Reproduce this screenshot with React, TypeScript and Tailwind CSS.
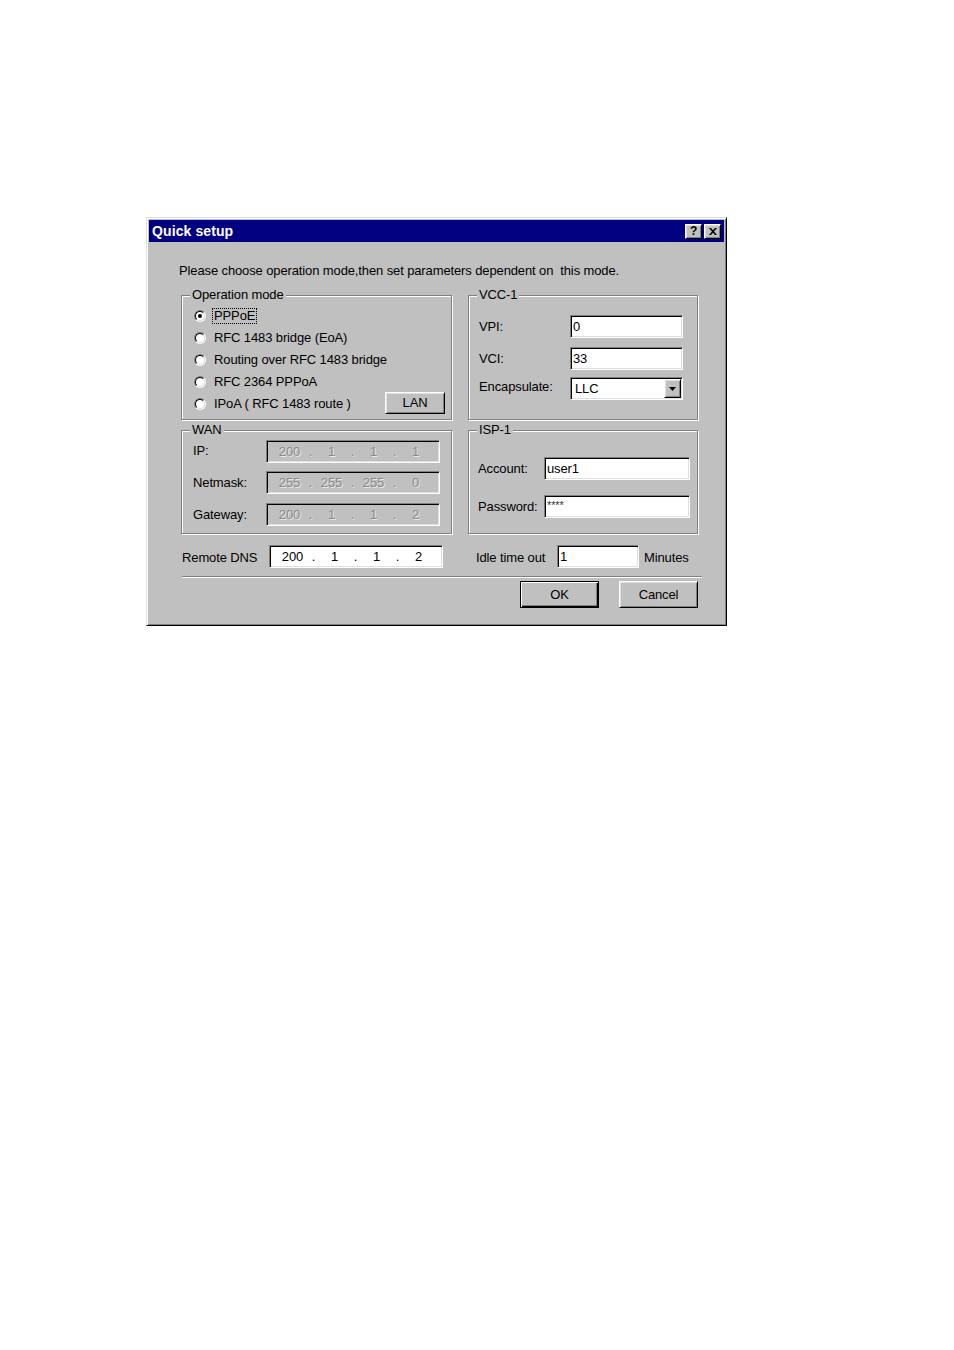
import React from "react";

const raised =
  "border border-t-white border-l-white border-r-black border-b-black shadow-[inset_1px_1px_0_#dfdfdf,inset_-1px_-1px_0_#808080]";
const sunken =
  "border border-t-[#808080] border-l-[#808080] border-r-white border-b-white shadow-[inset_1px_1px_0_#000,inset_-1px_-1px_0_#dfdfdf]";
const group = "relative border border-[#808080] shadow-[inset_1px_1px_0_#fff,1px_1px_0_#fff]";

function GroupLabel({ children }: { children: React.ReactNode }) {
  return (
    <span className="absolute left-[8px] -top-[9px] bg-[#c0c0c0] px-[2px] leading-[16px] whitespace-nowrap">
      {children}
    </span>
  );
}

function Radio({ checked }: { checked?: boolean }) {
  return (
    <span className="w-[12px] h-[12px] shrink-0 rounded-full border border-t-[#808080] border-l-[#808080] border-r-white border-b-white flex items-center justify-center">
      <span className="w-[10px] h-[10px] rounded-full border border-t-black border-l-black border-r-[#dfdfdf] border-b-[#dfdfdf] bg-white flex items-center justify-center">
        {checked && <span className="w-[4px] h-[4px] rounded-full bg-black" />}
      </span>
    </span>
  );
}

function Field({
  className,
  disabled,
  children,
}: {
  className: string;
  disabled?: boolean;
  children?: React.ReactNode;
}) {
  return (
    <div
      className={`${sunken} ${className} h-[23px] shrink-0 flex items-center ${
        disabled ? "bg-[#c0c0c0]" : "bg-white"
      }`}
    >
      {children}
    </div>
  );
}

function Ip({ parts, disabled }: { parts: string[]; disabled?: boolean }) {
  return (
    <div
      className={`flex pl-[4px] ${
        disabled ? "text-[#8a8a8a] [text-shadow:1px_1px_0_#e8e8e8]" : "text-black"
      }`}
    >
      {parts.map((p, i) => (
        <React.Fragment key={i}>
          {i > 0 && <span className="w-[5px] text-center">.</span>}
          <span className="w-[37px] text-center">{p}</span>
        </React.Fragment>
      ))}
    </div>
  );
}

function CloseGlyph() {
  return (
    <svg width="8" height="7" viewBox="0 0 8 7">
      <path d="M0 0h2l2 2.3L6 0h2L5 3.5 8 7H6L4 4.7 2 7H0l3-3.5z" fill="#000" />
    </svg>
  );
}

export default function App() {
  const radios = [
    "PPPoE",
    "RFC 1483 bridge (EoA)",
    "Routing over RFC 1483 bridge",
    "RFC 2364 PPPoA",
    "IPoA ( RFC 1483 route )",
  ];
  return (
    <div className="min-h-[1350px] w-full bg-white pt-[217px] pl-[146px] font-['Liberation_Sans',Arial,sans-serif] text-[13px] leading-[16px] tracking-[-0.12px] text-black">
      <div className="w-[581px] h-[409px] bg-[#c0c0c0] border border-t-[#dfdfdf] border-l-[#dfdfdf] border-r-black border-b-black shadow-[inset_1px_1px_0_#fff,inset_-1px_-1px_0_#808080] p-[2px] flex flex-col">
        {/* Title bar */}
        <div className="h-[22px] shrink-0 bg-[#000080] flex items-center pl-[3px] pr-[3px]">
          <span className="text-white font-bold text-[14px] leading-[16px] tracking-[0.1px]">Quick setup</span>
          <div className="ml-auto flex gap-[2px]">
            <span className={`${raised} w-[17px] h-[15px] bg-[#c0c0c0] flex items-center justify-center text-[12px] leading-[12px] font-bold`}>
              ?
            </span>
            <span className={`${raised} w-[17px] h-[15px] bg-[#c0c0c0] flex items-center justify-center`}>
              <CloseGlyph />
            </span>
          </div>
        </div>

        {/* Body */}
        <div className="flex flex-col flex-1">
          <p className="mt-[21px] pl-[30px] whitespace-pre">
            Please choose operation mode,then set parameters dependent on  this mode.
          </p>

          <div className="mt-[16px] ml-[32px] grid grid-cols-[271px_230px] gap-x-[16px]">
            {/* Operation mode */}
            <div className={`${group} h-[125px]`}>
              <GroupLabel>Operation mode</GroupLabel>
              <div className="pt-[9px] flex flex-col">
                {radios.map((r, i) => (
                  <div key={r} className="h-[22px] flex items-center pl-[12px] gap-[8px]">
                    <Radio checked={i === 0} />
                    {i === 0 ? (
                      <span className="outline-1 outline-dotted outline-black px-[1px] -ml-[1px] leading-[14px]">
                        {r}
                      </span>
                    ) : (
                      <span className="whitespace-pre">{r}</span>
                    )}
                    {i === 4 && (
                      <button className={`${raised} ml-auto mr-[6px] -mt-[2px] w-[60px] h-[22px] bg-[#c0c0c0] text-[13px] leading-[16px]`}>
                        LAN
                      </button>
                    )}
                  </div>
                ))}
              </div>
            </div>

            {/* VCC-1 */}
            <div className={`${group} h-[125px]`}>
              <GroupLabel>VCC-1</GroupLabel>
              <div className="pt-[19px] flex flex-col">
                <div className="flex items-center h-[23px]">
                  <span className="w-[101px] pl-[10px]">VPI:</span>
                  <Field className="w-[113px]">
                    <span className="pl-[2px]">0</span>
                  </Field>
                </div>
                <div className="mt-[9px] flex items-center h-[23px]">
                  <span className="w-[101px] pl-[10px]">VCI:</span>
                  <Field className="w-[113px]">
                    <span className="pl-[2px]">33</span>
                  </Field>
                </div>
                <div className="mt-[7px] flex items-center h-[23px]">
                  <span className="w-[101px] pl-[10px] -mt-[4px]">Encapsulate:</span>
                  <div className={`${sunken} w-[113px] h-[23px] bg-white flex items-center p-[1px]`}>
                    <span className="pl-[3px] flex-1">LLC</span>
                    <span className={`${raised} w-[17px] h-[19px] bg-[#c0c0c0] flex items-center justify-center`}>
                      <svg width="7" height="4" viewBox="0 0 7 4">
                        <path d="M0 0h7L3.5 4z" fill="#000" />
                      </svg>
                    </span>
                  </div>
                </div>
              </div>
            </div>
          </div>

          <div className="mt-[10px] ml-[32px] grid grid-cols-[271px_230px] gap-x-[16px]">
            {/* WAN */}
            <div className={`${group} h-[104px]`}>
              <GroupLabel>WAN</GroupLabel>
              <div className="pt-[9px] flex flex-col">
                <div className="flex items-center h-[23px]">
                  <span className="w-[84px] pl-[11px] -mt-[2px]">IP:</span>
                  <Field className="w-[174px]" disabled>
                    <Ip parts={["200", "1", "1", "1"]} disabled />
                  </Field>
                </div>
                <div className="mt-[8px] flex items-center h-[23px]">
                  <span className="w-[84px] pl-[11px]">Netmask:</span>
                  <Field className="w-[174px]" disabled>
                    <Ip parts={["255", "255", "255", "0"]} disabled />
                  </Field>
                </div>
                <div className="mt-[9px] flex items-center h-[23px]">
                  <span className="w-[84px] pl-[11px] mt-[1px]">Gateway:</span>
                  <Field className="w-[174px]" disabled>
                    <Ip parts={["200", "1", "1", "2"]} disabled />
                  </Field>
                </div>
              </div>
            </div>

            {/* ISP-1 */}
            <div className={`${group} h-[104px]`}>
              <GroupLabel>ISP-1</GroupLabel>
              <div className="pt-[26px] flex flex-col">
                <div className="flex items-center h-[23px]">
                  <span className="w-[75px] pl-[9px]">Account:</span>
                  <Field className="w-[146px]">
                    <span className="pl-[2px]">user1</span>
                  </Field>
                </div>
                <div className="mt-[15px] flex items-center h-[23px]">
                  <span className="w-[75px] pl-[9px]">Password:</span>
                  <Field className="w-[146px]">
                    <span className="pl-[2px] text-[11px] text-[#333] -mt-[4px]">****</span>
                  </Field>
                </div>
              </div>
            </div>
          </div>

          {/* Remote DNS / idle */}
          <div className="mt-[11px] ml-[33px] flex items-center h-[23px]">
            <span className="w-[87px] shrink-0 mt-[2px]">Remote DNS</span>
            <Field className="w-[174px]">
              <Ip parts={["200", "1", "1", "2"]} />
            </Field>
            <span className="ml-[33px] w-[81px] shrink-0 mt-[2px]">Idle time out</span>
            <Field className="w-[82px]">
              <span className="pl-[2px]">1</span>
            </Field>
            <span className="ml-[5px] mt-[2px]">Minutes</span>
          </div>

          <div className="mt-[8px] ml-[33px] w-[520px] h-[2px] border-t border-t-[#808080] border-b border-b-white" />

          <div className="mt-[3px] flex justify-end pr-[26px] gap-[20px]">
            <button className="w-[79px] h-[27px] bg-[#c0c0c0] border border-black shadow-[inset_1px_1px_0_#fff,inset_-1px_-1px_0_#000,inset_-2px_-2px_0_#808080] text-[13px] leading-[16px]">
              OK
            </button>
            <button className={`${raised} w-[79px] h-[27px] bg-[#c0c0c0] text-[13px] leading-[16px]`}>
              Cancel
            </button>
          </div>
        </div>
      </div>
    </div>
  );
}
